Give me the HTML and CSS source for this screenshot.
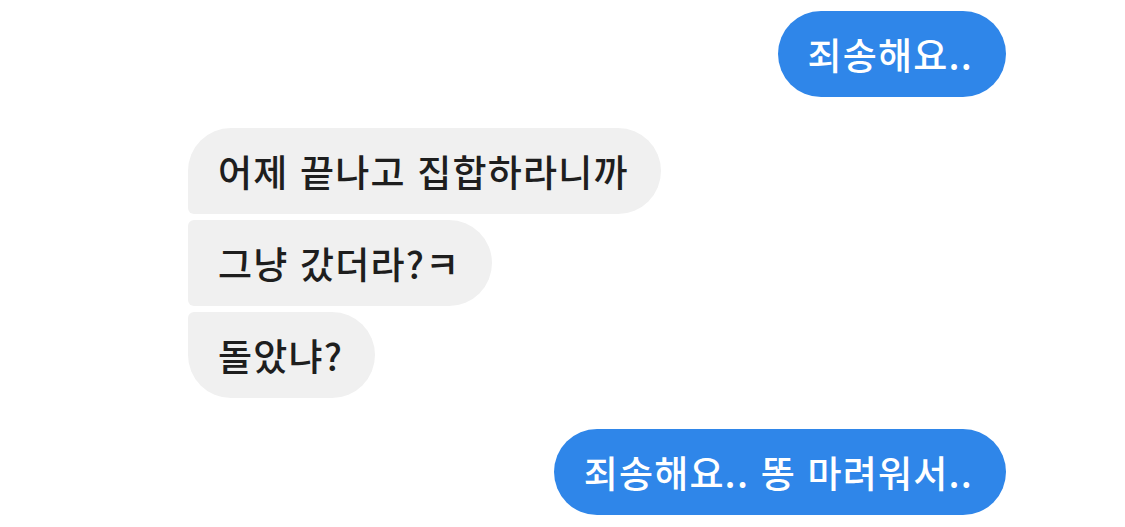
FILE: index.html
```html
<!DOCTYPE html>
<html lang="ko">
<head>
    <meta charset="UTF-8">
    <meta name="viewport" content="width=device-width, initial-scale=1.0">
    <title>Chat</title>
    <link rel="stylesheet" href="styles.css">
</head>
<body>
    <div class="chat">
        <!-- sent -->
        <div class="group sent">
            <div class="bubble">죄송해요..</div>
        </div>

        <!-- received -->
        <div class="group received">
            <div class="bubble first">어제 끝나고 집합하라니까</div>
            <div class="bubble middle">그냥 갔더라?ㅋ</div>
            <div class="bubble last">돌았냐?</div>
        </div>

        <div class="group sent">
            <div class="bubble">죄송해요.. 똥 마려워서..</div>
        </div>
    </div>
</body>
</html>
```

FILE: styles.css
```css
/* Basic styling for the page */
body {
    margin: 0;
    background-color: #fff;
    font-family: "Noto Sans CJK KR", "Noto Sans", sans-serif;
}
.chat {
    width: 818px;
    margin-left: 188px;
    padding-top: 11px;
    display: flex;
    flex-direction: column;
    gap: 31px;
}
.group {
    display: flex;
    flex-direction: column;
    gap: 6px;
}
.sent {
    align-items: flex-end;
}
.received {
    align-items: flex-start;
}
.bubble {
    height: 86px;
    box-sizing: border-box;
    display: flex;
    align-items: center;
    padding: 0 32px 0 30px;
    font-size: 37px;
    font-weight: 500;
    letter-spacing: 1.2px;
    border-radius: 43px;
    white-space: nowrap;
}
.sent .bubble {
    background-color: #2f86e9;
    color: #fff;
    padding-right: 33px;
}
.received .bubble {
    background-color: #f0f0f0;
    color: #1e1e1e;
}
.received .first {
    border-bottom-left-radius: 6px;
}
.received .middle {
    border-top-left-radius: 6px;
    border-bottom-left-radius: 6px;
}
.received .last {
    border-top-left-radius: 6px;
}
```
